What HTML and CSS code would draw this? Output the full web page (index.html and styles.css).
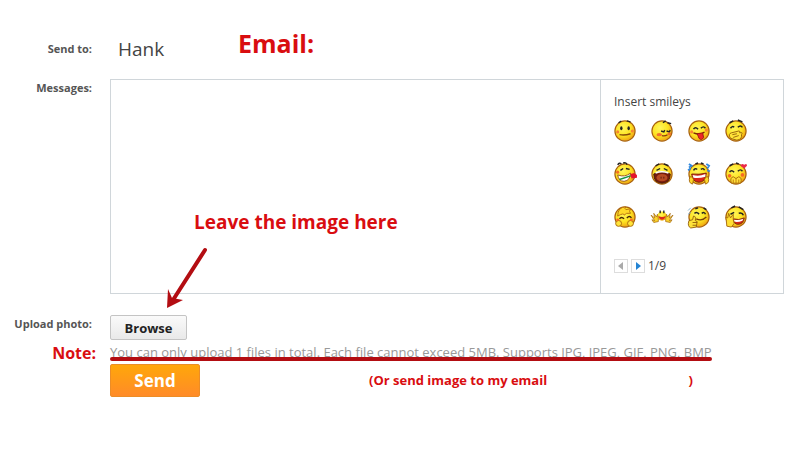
FILE: index.html
```html
<!DOCTYPE html>
<html lang="en">
<head>
    <meta charset="UTF-8">
    <meta name="viewport" content="width=device-width, initial-scale=1">
    <title>Send message</title>
    <link rel="stylesheet" href="styles.css">
</head>
<body>
<svg class="defs" aria-hidden="true">
    <defs>
        <radialGradient id="skin" cx="40%" cy="35%" r="65%">
            <stop offset="0" stop-color="#fff65a"/>
            <stop offset="0.6" stop-color="#fde322"/>
            <stop offset="1" stop-color="#f0a812"/>
        </radialGradient>
        <symbol id="face" viewBox="0 0 24 24">
            <circle cx="12" cy="12" r="11" fill="url(#skin)" stroke="#a9620f" stroke-width="1.3"/>
        </symbol>
    </defs>
</svg>

<form class="message-form">
    <div class="row row--to">
        <span class="label">Send to:</span>
        <span class="to-name">Hank</span>
        <strong class="note to-email">Email:</strong>
    </div>

    <div class="row">
        <label class="label" for="message">Messages:</label>
        <div class="editor">
            <textarea id="message" class="editor__text"></textarea>
            <div class="smileys">
                <div class="smileys__title">Insert smileys</div>
                <div class="smileys__list">
                    <button type="button" aria-label="smile"><svg viewBox="0 0 24 24"><use href="#face"/><path d="M5 3l3-2M14 1l4 1" stroke="#222" stroke-width="1.4"/><ellipse cx="8" cy="9" rx="1.3" ry="2.2" fill="#222"/><ellipse cx="16" cy="9" rx="1.3" ry="2.2" fill="#222"/><path d="M6 16q6 1 12-1" fill="none" stroke="#874a08" stroke-width="1.5"/><circle cx="4" cy="13" r="1.7" fill="#f98432"/><circle cx="20" cy="12" r="1.7" fill="#f98432"/></svg></button>
                    <button type="button" aria-label="shy"><svg viewBox="0 0 24 24"><use href="#face"/><path d="M13 3l3-2M18 3l4 1M11 12l3 1 1-2M17 12l3 1 1-2" fill="none" stroke="#222" stroke-width="1.5"/><path d="M12 17q3 1 6-1" fill="none" stroke="#8b3b0a" stroke-width="1.3"/><ellipse cx="9" cy="16" rx="3" ry="1.8" fill="#f3702d"/><ellipse cx="20" cy="15" rx="2" ry="1.5" fill="#f3702d"/></svg></button>
                    <button type="button" aria-label="tongue"><svg viewBox="0 0 24 24"><use href="#face"/><path d="M6 10q2-3 5 0M14 9q3-3 5 0" fill="none" stroke="#222" stroke-width="1.6"/><path d="M6 14q7 3 12-1" fill="none" stroke="#7c2805" stroke-width="1.5"/><path d="M10 15l6-1 1 5q-2 4-5 1z" fill="#ee2627" stroke="#981713"/><circle cx="4" cy="13" r="1.7" fill="#f98432"/><circle cx="20" cy="11" r="1.7" fill="#f98432"/></svg></button>
                    <button type="button" aria-label="giggle"><svg viewBox="0 0 24 24"><use href="#face"/><path d="M5 3l4-2M14 0l5 2M6 9q2-3 4-1M14 8q3-3 5 0" fill="none" stroke="#222" stroke-width="1.6"/><path d="M6 20q-3-5 1-6l8-2q2 0 1 2 4-1 2 2 1 5-5 6z" fill="#ffe438" stroke="#96600c"/><path d="M8 16l5-1M9 19l6-2" stroke="#96600c"/></svg></button>

                    <button type="button" aria-label="rose"><svg viewBox="0 0 24 24"><use href="#face"/><path d="M4 2q2-3 4-1M10 0q4-1 4 2M7 8l3-2M13 6l4 1" fill="none" stroke="#222" stroke-width="1.5"/><path d="M4 13q8 3 14-2 0 8-7 9-6 0-7-7z" fill="#fff" stroke="#925014"/><path d="M6 18l12-4" stroke="#169442" stroke-width="1.6"/><path d="M18 12l4-1 3 2v3l-6 1z" fill="#e4152b"/><circle cx="4" cy="10" r="1.7" fill="#f66b25"/></svg></button>
                    <button type="button" aria-label="laugh"><svg viewBox="0 0 24 24"><use href="#face"/><path d="M5 3l4-2M14 1l5 2M6 8l4-2M14 6l4 2" fill="none" stroke="#222" stroke-width="1.5"/><path d="M3 12q9-5 18 0 0 10-9 10t-9-10z" fill="#751b0b" stroke="#47190a"/><path d="M5 11q7-3 14 0" stroke="#fff" stroke-width="1.7" fill="none"/><ellipse cx="12" cy="16" rx="6" ry="4" fill="#b74a22"/><path d="M11 15v2M14 15v2" stroke="#54180c"/></svg></button>
                    <button type="button" aria-label="tears of joy"><svg viewBox="0 0 24 24"><use href="#face"/><path d="M1 1l3 2-3 2M20 1l3 2-2 3M0 8l3-2M21 8l3 1" fill="none" stroke="#3389dc" stroke-width="2"/><path d="M6 8q2-3 4-1M14 7q3-2 4 1M8 1l3-1M14 0l3 1" fill="none" stroke="#222" stroke-width="1.5"/><path d="M4 12q8 1 16-1-1 10-8 10t-8-9z" fill="#d9251b" stroke="#762009"/><path d="M5 13q7 2 14-1v3q-7 2-13 1z" fill="#fff"/><path d="M2 15q3-1 4 3l-1 5q-5-1-3-8zM22 15q-3-1-4 3l1 5q5-1 3-8z" fill="#fed929" stroke="#a5670d"/></svg></button>
                    <button type="button" aria-label="in love"><svg viewBox="0 0 24 24"><use href="#face"/><path d="M5 3l4-2M12 0l3 1M5 10q2-3 5 0M14 9q3-3 5 0" fill="none" stroke="#222" stroke-width="1.6"/><path d="M21 6l-4-3q1-3 4-1 3-2 3 1z" fill="#eb2848"/><path d="M7 22q-2-6 2-7l3 2 3-2q4 1 2 7z" fill="#ffe13a" stroke="#a5670d"/><path d="M12 17v5M9 18v4M15 18v4" stroke="#bd790f"/><circle cx="5" cy="14" r="2" fill="#f66b25"/><circle cx="19" cy="13" r="2" fill="#f66b25"/></svg></button>

                    <button type="button" aria-label="bashful"><svg viewBox="0 0 24 24"><use href="#face"/><path d="M4 11Q4 1 13 1q-2 2 0 3l5-1q-2 3 0 5-5-1-7 2 0-3-7 1z" fill="#ffda29" stroke="#b56c0e"/><path d="M6 14q2-3 5 0M14 13q3-3 5 0" fill="none" stroke="#442608" stroke-width="1.5"/><circle cx="5" cy="19" r="3.2" fill="#ffe43a" stroke="#a5670d"/><circle cx="18" cy="19" r="3.2" fill="#ffe43a" stroke="#a5670d"/><circle cx="4" cy="15" r="1.5" fill="#f66b25"/><circle cx="19" cy="15" r="1.5" fill="#f66b25"/></svg></button>
                    <button type="button" aria-label="hug"><svg viewBox="0 0 24 24"><circle cx="12" cy="11" r="5" fill="url(#skin)"/><path d="M10 5v3M14 5v3" stroke="#222" stroke-width="1.5"/><path d="M8 11q4 2 8 0-1 4-4 4t-4-4z" fill="#db2a1b"/><path d="M8 17l-5 1-2-3 3 1-4-6 4 3-1-5 3 4 1-3 1 5zM16 17l5 1 2-3-3 1 4-6-4 3 1-5-3 4-1-3-1 5z" fill="#fbd32a" stroke="#a5670d" stroke-width="0.8"/></svg></button>
                    <button type="button" aria-label="thumbs up"><svg viewBox="0 0 24 24"><use href="#face"/><path d="M0 5l3-3M0 9l3-2" stroke="#7caccc"/><path d="M7 8q3-2 5 1M15 8q3-2 4 1M8 3l3-1M17 2l3 2" fill="none" stroke="#222" stroke-width="1.6"/><path d="M9 14q6 3 11-2" fill="none" stroke="#793f09" stroke-width="1.5"/><path d="M1 16l4-1 1-4q3 0 2 5l2 1-1 6-6 1q-4-2-2-8z" fill="#fee23a" stroke="#95600c"/><path d="M5 18h5M5 21h4" stroke="#95600c"/></svg></button>
                    <button type="button" aria-label="facepalm"><svg viewBox="0 0 24 24"><use href="#face"/><path d="M7 2l4-2M15 1l5 3M6 9l4-2M15 8q4-1 5 2" fill="none" stroke="#222" stroke-width="1.6"/><path d="M9 14q6 2 12-1-1 7-7 7-4 0-5-6z" fill="#d7281a" stroke="#7d2909"/><path d="M10 15q5 1 10-1l-1 2q-5 2-9 1z" fill="#fff"/><path d="M2 22l-1-10 2 1 1-5 2 5 3-4v6l1 4-3 4z" fill="#ffdf34" stroke="#a5670d"/></svg></button>
                </div>
                <div class="pager">
                    <button type="button" class="pager__btn" aria-label="Previous page" disabled><svg viewBox="0 0 12 12"><path d="M8 2v8L3 6z" fill="#aaa"/></svg></button>
                    <button type="button" class="pager__btn" aria-label="Next page"><svg viewBox="0 0 12 12"><path d="M4 2v8l5-4z" fill="#2484d4"/></svg></button>
                    <span>1/9</span>
                </div>
            </div>
            <strong class="note hint">Leave the image here</strong>
            <svg class="arrow" viewBox="0 0 42 64" aria-hidden="true">
                <path d="M39 3L7 53" stroke="#b30d12" stroke-width="4" stroke-linecap="round"/>
                <path d="M1 61l1-19 4 9 11 2-16 8z" fill="#b30d12"/>
            </svg>
        </div>
    </div>

    <div class="row row--upload">
        <span class="label" id="upload-label">Upload photo:</span>
        <button type="button" class="btn btn--browse" aria-describedby="upload-label">Browse</button>
    </div>

    <div class="row row--limits">
        <strong class="note limits-note">Note:</strong>
        <p class="limits">You can only upload 1 files in total. Each file cannot exceed 5MB. Supports JPG, JPEG, GIF, PNG, BMP</p>
    </div>

    <div class="row row--send">
        <button type="submit" class="btn btn--send">Send</button>
        <strong class="note or-email"><span>(Or send image to my email</span><span>)</span></strong>
    </div>
</form>
</body>
</html>
```
FILE: styles.css
```css
* {
    box-sizing: border-box;
}

body {
    margin: 0;
    background: #fff;
    color: #444;
    font-family: "Open Sans", "Noto Sans", sans-serif;
    font-size: 12px;
}

button {
    font-family: inherit;
    cursor: pointer;
}

.defs {
    position: absolute;
    width: 0;
    height: 0;
}

.message-form {
    padding: 19px 16px 24px 0;
}

.row {
    display: flex;
    gap: 18px;
}

.label {
    flex: none;
    width: 92px;
    text-align: right;
    font-size: 11px;
    font-weight: bold;
    color: #555;
    line-height: 18px;
    white-space: nowrap;
}

.note {
    color: #d90d10;
}

/* recipient */
.row--to {
    height: 60px;
    align-items: center;
}

.to-name {
    width: 102px;
    padding-left: 8px;
    font-size: 19px;
}

.to-email {
    align-self: flex-start;
    margin-left: 8px;
    font-size: 25px;
    line-height: 48px;
}

/* message box */
.editor {
    position: relative;
    flex: 1;
    display: flex;
    border: 1px solid #d0d6da;
}

.editor__text {
    flex: 1;
    min-width: 0;
    padding: 8px;
    border: 0;
    outline: 0;
    resize: none;
    font: inherit;
}

.smileys {
    flex: none;
    width: 183px;
    padding: 12px 13px 18px;
    border-left: 1px solid #d0d6da;
}

.smileys__title {
    line-height: 20px;
}

.smileys__list {
    display: grid;
    grid-template-columns: repeat(4, 22px);
    gap: 21px 15px;
    margin: 8px 0 29px;
}

.smileys__list button {
    height: 22px;
    padding: 0;
    border: 0;
    background: none;
}

.smileys__list svg {
    display: block;
    width: 22px;
    height: 22px;
    overflow: visible;
}

.pager {
    display: flex;
    align-items: center;
    gap: 3px;
    line-height: 18px;
}

.pager__btn {
    width: 14px;
    height: 14px;
    padding: 0;
    border: 1px solid #ddd;
    background: #fff;
}

.pager__btn svg {
    display: block;
    width: 12px;
    height: 12px;
}

.hint {
    position: absolute;
    left: 83px;
    top: 130px;
    font-size: 19px;
    line-height: 24px;
}

.arrow {
    position: absolute;
    left: 55px;
    top: 167px;
    width: 42px;
    height: 64px;
}

/* upload */
.row--upload {
    margin-top: 21px;
}

.btn {
    border-radius: 2px;
    font-weight: bold;
}

.btn--browse {
    width: 77px;
    height: 25px;
    padding: 0;
    border: 1px solid #c4c4c4;
    background: linear-gradient(#fafafa, #e9e9e9);
    color: #222;
    font-size: 13px;
}

.row--limits {
    gap: 14px;
    margin-top: 2px;
}

.limits-note {
    flex: none;
    width: 96px;
    text-align: right;
    font-size: 16px;
    line-height: 22px;
}

.limits {
    position: relative;
    margin: 0;
    color: #999;
    font-size: 13px;
    line-height: 20px;
}

/* marker stroke over the bottom of the text */
.limits::after {
    content: "";
    position: absolute;
    left: 0;
    right: 0;
    bottom: 3px;
    height: 4px;
    border-radius: 2px;
    background: #b30d12;
}

.row--send {
    gap: 0;
    padding-left: 110px;
}

.btn--send {
    width: 90px;
    height: 33px;
    padding: 0;
    border: 1px solid #ec8d26;
    background: linear-gradient(#ffa70a, #ff8b28);
    color: #fff;
    font-size: 17px;
}

.or-email {
    display: flex;
    justify-content: space-between;
    width: 324px;
    margin-left: 169px;
    font-size: 13px;
    line-height: 32px;
}
```
